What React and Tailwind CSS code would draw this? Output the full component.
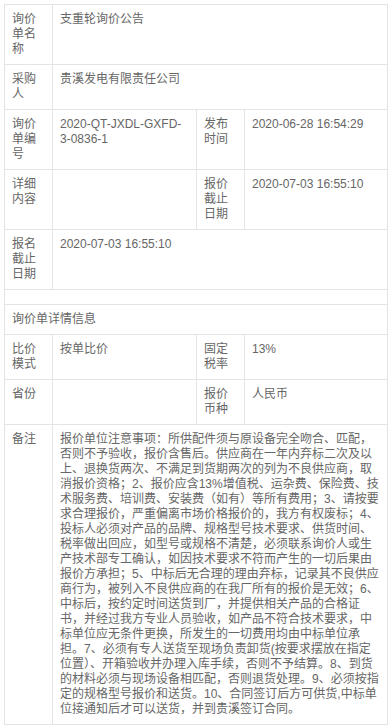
import React from "react";

const remark =
  "报价单位注意事项：所供配件须与原设备完全吻合、匹配，否则不予验收，报价含售后。供应商在一年内弃标二次及以上、退换货两次、不满足到货期两次的列为不良供应商，取消报价资格；2、报价应含13%增值税、运杂费、保险费、技术服务费、培训费、安装费（如有）等所有费用；3、请按要求合理报价，严重偏离市场价格报价的，我方有权废标；4、投标人必须对产品的品牌、规格型号技术要求、供货时间、税率做出回应，如型号或规格不清楚，必须联系询价人或生产技术部专工确认，如因技术要求不符而产生的一切后果由报价方承担；5、中标后无合理的理由弃标，记录其不良供应商行为，被列入不良供应商的在我厂所有的报价是无效；6、中标后，按约定时间送货到厂，并提供相关产品的合格证书，并经过我方专业人员验收，如产品不符合技术要求，中标单位应无条件更换，所发生的一切费用均由中标单位承担。7、必须有专人送货至现场负责卸货(按要求摆放在指定位置）、开箱验收并办理入库手续，否则不予结算。8、到货的材料必须与现场设备相匹配，否则退货处理。9、必须按指定的规格型号报价和送货。10、合同签订后方可供货,中标单位接通知后才可以送货，并到贵溪签订合同。";

const Cell = ({ children, colSpan }) => (
  <td
    colSpan={colSpan}
    className="border border-[#e4e4e4] px-[7px] py-[7px] align-top break-words"
  >
    {children}
  </td>
);

export default function App() {
  return (
    <div
      className="bg-white p-[4px] text-[12px] leading-[15px] text-[#666]"
      style={{ fontFamily: '"Liberation Sans", "Noto Sans CJK SC", sans-serif' }}
    >
      <table className="w-full table-fixed border-collapse">
        <colgroup>
          <col className="w-[48px]" />
          <col className="w-[144px]" />
          <col className="w-[48px]" />
          <col />
        </colgroup>
        <tbody>
          <tr>
            <Cell>询价单名称</Cell>
            <Cell colSpan={3}>支重轮询价公告</Cell>
          </tr>
          <tr>
            <Cell>采购人</Cell>
            <Cell colSpan={3}>贵溪发电有限责任公司</Cell>
          </tr>
          <tr>
            <Cell>询价单编号</Cell>
            <Cell>2020-QT-JXDL-GXFD-3-0836-1</Cell>
            <Cell>发布时间</Cell>
            <Cell>2020-06-28 16:54:29</Cell>
          </tr>
          <tr>
            <Cell>详细内容</Cell>
            <Cell></Cell>
            <Cell>报价截止日期</Cell>
            <Cell>2020-07-03 16:55:10</Cell>
          </tr>
          <tr>
            <Cell>报名截止日期</Cell>
            <Cell colSpan={3}>2020-07-03 16:55:10</Cell>
          </tr>
          <tr>
            <Cell colSpan={4}></Cell>
          </tr>
          <tr>
            <Cell colSpan={4}>询价单详情信息</Cell>
          </tr>
          <tr>
            <Cell>比价模式</Cell>
            <Cell>按单比价</Cell>
            <Cell>固定税率</Cell>
            <Cell>13%</Cell>
          </tr>
          <tr>
            <Cell>省份</Cell>
            <Cell></Cell>
            <Cell>报价币种</Cell>
            <Cell>人民币</Cell>
          </tr>
          <tr>
            <Cell>备注</Cell>
            <Cell colSpan={3}>{remark}</Cell>
          </tr>
        </tbody>
      </table>
    </div>
  );
}
